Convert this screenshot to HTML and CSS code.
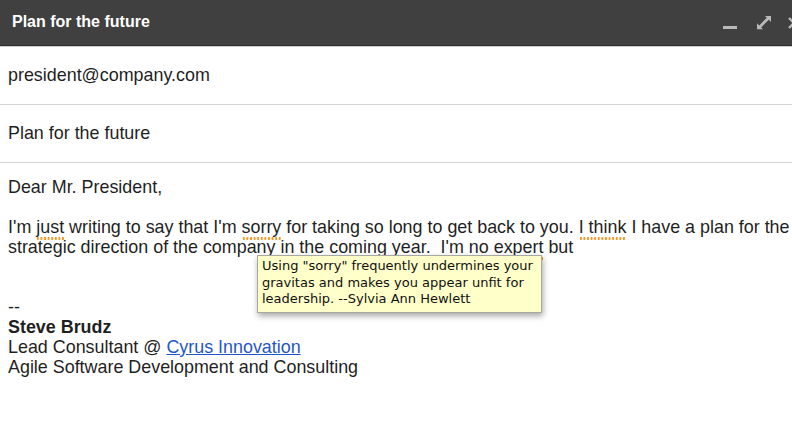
FILE: index.html
```html
<!DOCTYPE html>
<html lang="en">
<head>
<meta charset="utf-8">
<title>Plan for the future</title>
<link rel="stylesheet" href="styles.css">
</head>
<body>
<div class="compose">
  <header class="titlebar">
    <span class="title">Plan for the future</span>
    <div class="controls">
      <svg class="ctl" width="16" height="16" viewBox="0 0 16 16"><rect x="1" y="11" width="14" height="3" fill="#b9b9b9"/></svg>
      <svg class="ctl" width="16" height="16" viewBox="0 0 16 16"><g fill="#b9b9b9"><path d="M9 1h6v6l-2.2-2.2-7.6 7.6L7 14.2H1v-6l2.2 2.2 7.6-7.6z"/></g></svg>
      <svg class="ctl close" width="16" height="16" viewBox="0 0 16 16"><path d="M3 3l10 10M13 3L3 13" stroke="#b9b9b9" stroke-width="2.4"/></svg>
    </div>
  </header>
  <div class="field">president@company.com</div>
  <div class="field">Plan for the future</div>
  <div class="message">
    <p>Dear Mr. President,</p>
    <p>I'm <span class="flag">just</span> writing to say that I'm <span class="flag">sorry</span> for taking so long to get back to you. <span class="flag">I think</span> I have a plan for the<br>strategic direction of the company in the coming year.&nbsp; I'm no <span class="flag">expert</span> but</p>
    <p class="gap"><br></p>
    <div class="signature">
      <div>--</div>
      <div class="name">Steve Brudz</div>
      <div>Lead Consultant @ <a href="#" class="link">Cyrus Innovation</a></div>
      <div>Agile Software Development and Consulting</div>
    </div>
    <div class="tip">Using "sorry" frequently undermines your<br>gravitas and makes you appear unfit for<br>leadership. --Sylvia Ann Hewlett</div>
  </div>
</div>
</body>
</html>
```

FILE: styles.css
```css
html, body {
  margin: 0;
  padding: 0;
  background: #ffffff;
}

body {
  width: 792px;
  height: 428px;
  overflow: hidden;
  font-family: "Liberation Sans", Arial, sans-serif;
  color: #1f1f1f;
}

.compose {
  width: 100%;
}

.titlebar {
  height: 45px;
  background: #404040;
  border-bottom: 1px solid #2f2f2f;
  box-shadow: 0 1px 0 #cdcdcd;
  display: flex;
  align-items: center;
  justify-content: space-between;
  padding-left: 12px;
  margin-bottom: 1px;
  overflow: hidden;
}

.title {
  color: #ffffff;
  font-weight: bold;
  font-size: 16px;
  margin-top: -2px;
}

.controls {
  display: flex;
  align-items: center;
  gap: 18px;
  margin-right: -10px;
  margin-top: 1px;
}

.ctl {
  display: block;
  flex: none;
}

.ctl.close {
  margin-left: -4px;
}

.field {
  height: 56px;
  border-bottom: 1px solid #d2d2d2;
  display: flex;
  align-items: center;
  padding-left: 8px;
  font-size: 17.9px;
  padding-bottom: 1px;
}

.message {
  position: relative;
  padding: 14px 0 0 8px;
  font-size: 17.9px;
  line-height: 20px;
  white-space: nowrap;
}

.message p {
  margin: 0 0 20px;
}

.message p.gap {
  margin: 0;
}

.flag {
  background-image: radial-gradient(circle, #f39a2c 1.1px, transparent 1.4px);
  background-size: 3.6px 3px;
  background-repeat: repeat-x;
  background-position: 0 100%;
  padding-bottom: 3px;
}

.name {
  font-weight: bold;
}

.link {
  color: #1f57c7;
  text-decoration: underline;
}

.tip {
  position: absolute;
  left: 257px;
  top: 92px;
  padding: 2px 8px 4px 4px;
  background: #ffffc9;
  border: 1px solid #a8a8a0;
  box-shadow: 1px 3px 6px rgba(0, 0, 0, 0.35);
  font-family: "DejaVu Sans", Verdana, sans-serif;
  font-size: 13px;
  line-height: 16.5px;
  color: #111111;
  white-space: nowrap;
}
```
